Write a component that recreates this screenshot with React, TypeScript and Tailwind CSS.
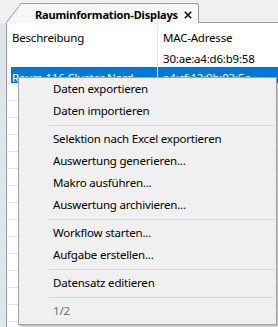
import React from "react";

const items: (string | null)[] = [
  "Daten exportieren",
  "Daten importieren",
  null,
  "Selektion nach Excel exportieren",
  "Auswertung generieren...",
  "Makro ausführen...",
  "Auswertung archivieren...",
  null,
  "Workflow starten...",
  "Aufgabe erstellen...",
  null,
  "Datensatz editieren",
  null,
];

export default function App() {
  const rows = Array.from({ length: 15 });
  return (
    <div className="relative w-[278px] h-[327px] overflow-hidden bg-[#f0f0f0] font-['Noto_Sans',sans-serif] text-[11.5px] tracking-[-0.2px] text-black leading-none">
      {/* Tab bar */}
      <div className="flex h-[23px] items-end">
        <div className="w-[6px] self-stretch" />
        <svg width="15" height="20" viewBox="0 0 15 20" className="block shrink-0">
          <polygon points="0,20 15,0 15,20" fill="#f7f7f7" />
          <line x1="0.5" y1="19.5" x2="15" y2="0.5" stroke="#9a9a9a" strokeWidth="1" />
        </svg>
        <div className="flex h-[20px] w-[178px] shrink-0 items-center border-t border-r border-[#9a9a9a] rounded-tr-[3px] bg-[#f7f7f7] pl-[14px]">
          <span className="whitespace-nowrap font-bold text-[11px] tracking-[-0.15px] mt-[1px]">Rauminformation-Displays</span>
          <svg width="8" height="8" viewBox="0 0 8 8" className="ml-auto mr-[6px] mt-[2px] shrink-0">
            <path d="M0.8 0.8 L7.2 7.2 M7.2 0.8 L0.8 7.2" stroke="#111" strokeWidth="1.6" />
          </svg>
        </div>
        <div className="flex-1 self-stretch border-b border-[#9a9a9a]" />
      </div>

      {/* Panel */}
      <div className="flex h-[304px]">
        <div className="w-[6px] bg-[#e1e5ec]" />
        <div className="flex-1 border-l border-[#8d9ab0] bg-white flex flex-col overflow-hidden">
          <div className="flex h-[27px] shrink-0 pt-[3px]">
            <div className="w-[150px] flex items-center pl-[5px]">Beschreibung</div>
            <div className="flex-1 flex items-center border-l border-[#e3e3e3] pl-[5px] -mt-[3px] pt-[3px]">MAC-Adresse</div>
          </div>
          <div className="flex h-[17px] shrink-0">
            <div className="w-[150px]" />
            <div className="flex-1 flex items-center border-l border-[#e3e3e3] pl-[5px]">30:ae:a4:d6:b9:58</div>
          </div>
          <div className="flex h-[17px] shrink-0 pl-[4px] border-b border-[#e6e6e6]">
            <div className="flex flex-1 bg-[#0078d7] text-white overflow-hidden">
              <div className="w-[146px] flex items-center pl-[1px] pt-[6px]">Raum 116 Cluster Nord</div>
              <div className="flex-1 flex items-center border-l border-[#ffffff] pl-[5px] pt-[6px]">a4:cf:12:9b:03:5e</div>
            </div>
          </div>
          {rows.map((_, i) => (
            <div key={i} className="h-[17px] shrink-0 border-b border-[#e6e6e6]" />
          ))}
        </div>
      </div>

      {/* Context menu */}
      <div className="absolute left-[18px] top-[77px] w-[259px] border border-[#a0a0a0] bg-[#f0f0f0] pb-[2px] shadow-[2px_2px_2px_rgba(0,0,0,0.25)]">
        {items.map((it, i) =>
          it === null ? (
            <div key={i} className="flex h-[6px] items-center pl-[30px] pr-[1px]">
              <div className="h-px flex-1 bg-[#d7d7d7]" />
            </div>
          ) : (
            <div key={i} className="flex h-[22px] items-center pl-[34px]">
              {it}
            </div>
          )
        )}
        <div className="flex h-[22px] items-center pl-[34px] text-[#6d6d6d]">1/2</div>
      </div>
    </div>
  );
}
